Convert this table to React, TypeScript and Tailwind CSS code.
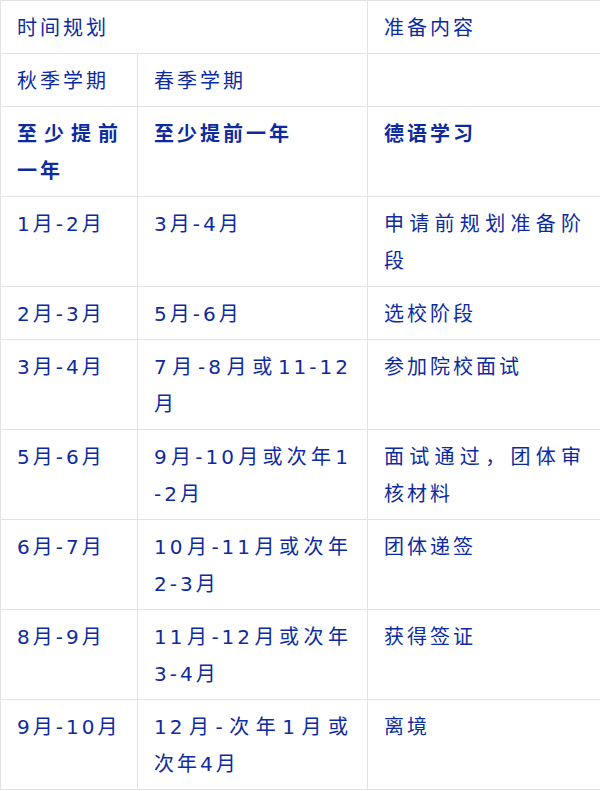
const rows: [string, string, string][] = [
  ["1月-2月", "3月-4月", "申请前规划准备阶|段"],
  ["2月-3月", "5月-6月", "选校阶段"],
  ["3月-4月", "7月-8月或11-12|月", "参加院校面试"],
  ["5月-6月", "9月-10月或次年1|-2月", "面试通过，团体审|核材料"],
  ["6月-7月", "10月-11月或次年|2-3月", "团体递签"],
  ["8月-9月", "11月-12月或次年|3-4月", "获得签证"],
  ["9月-10月", "12月-次年1月或|次年4月", "离境"],
];

const cell = "border border-[#e3e3e3] pl-4 pr-4 pt-[9px] pb-[6px] align-top";

function Lines({ text }: { text: string }) {
  const lines = text.split("|");
  return (
    <>
      {lines.map((line, i) => (
        <div
          key={i}
          className={
            i < lines.length - 1
              ? "text-justify [text-align-last:justify] whitespace-nowrap"
              : "whitespace-nowrap"
          }
        >
          {line}
        </div>
      ))}
    </>
  );
}

export default function App() {
  return (
    <div
      className="w-[600px] bg-white text-[#0d2b9f] text-[20px] leading-[37px] tracking-[3px]"
      style={{
        fontFamily: '"DejaVu Sans", "Noto Sans CJK SC", "Noto Sans", sans-serif',
      }}
    >
      <table className="w-full table-fixed border-collapse">
        <colgroup>
          <col className="w-[137px]" />
          <col className="w-[230px]" />
          <col className="w-[233px]" />
        </colgroup>
        <tbody>
          <tr>
            <td className={cell} colSpan={2}>
              时间规划
            </td>
            <td className={cell}>准备内容</td>
          </tr>
          <tr>
            <td className={cell}>秋季学期</td>
            <td className={cell}>春季学期</td>
            <td className={cell}></td>
          </tr>
          <tr className="font-bold">
            <td className={cell}>
              <Lines text="至少提前|一年" />
            </td>
            <td className={cell}>至少提前一年</td>
            <td className={cell}>德语学习</td>
          </tr>
          {rows.map(([a, b, c]) => (
            <tr key={a}>
              <td className={cell}>
                <Lines text={a} />
              </td>
              <td className={cell}>
                <Lines text={b} />
              </td>
              <td className={cell}>
                <Lines text={c} />
              </td>
            </tr>
          ))}
        </tbody>
      </table>
    </div>
  );
}
